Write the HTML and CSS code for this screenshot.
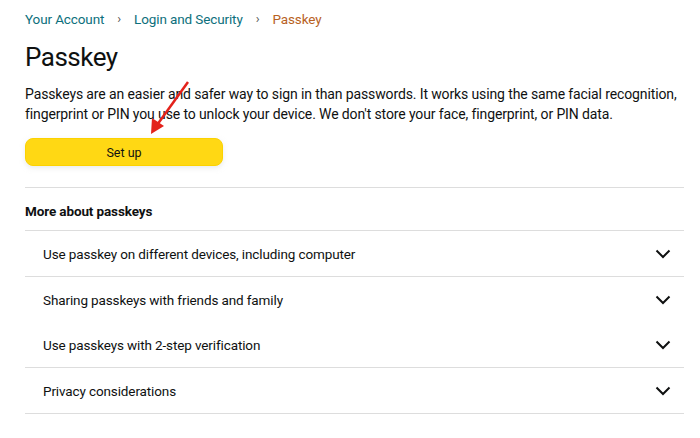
FILE: index.html
```html
<!DOCTYPE html>
<html>
<head>
  <meta charset="UTF-8">
  <title>Passkey</title>
  <link rel="stylesheet" href="styles.css">
</head>
<body>
  <div class="page">
    <div class="breadcrumb">
      <a href="#">Your Account</a>
      <span class="sep">›</span>
      <a href="#">Login and Security</a>
      <span class="sep">›</span>
      <span class="current">Passkey</span>
    </div>

    <h1>Passkey</h1>
    <p class="intro">Passkeys are an easier and safer way to sign in than passwords. It works using the same facial recognition, fingerprint or PIN you use to unlock your device. We don't store your face, fingerprint, or PIN data.</p>

    <button class="setup">Set up</button>

    <div class="more">
      <div class="more-title">More about passkeys</div>
      <div class="item">
        <span>Use passkey on different devices, including computer</span>
        <svg class="chev" width="16" height="10" viewBox="0 0 16 10"><polyline points="1.5,1.5 8,8 14.5,1.5" /></svg>
      </div>
      <div class="item no-line">
        <span>Sharing passkeys with friends and family</span>
        <svg class="chev" width="16" height="10" viewBox="0 0 16 10"><polyline points="1.5,1.5 8,8 14.5,1.5" /></svg>
      </div>
      <div class="item">
        <span>Use passkeys with 2-step verification</span>
        <svg class="chev" width="16" height="10" viewBox="0 0 16 10"><polyline points="1.5,1.5 8,8 14.5,1.5" /></svg>
      </div>
      <div class="item">
        <span>Privacy considerations</span>
        <svg class="chev" width="16" height="10" viewBox="0 0 16 10"><polyline points="1.5,1.5 8,8 14.5,1.5" /></svg>
      </div>
    </div>

    <!-- red annotation arrow -->
    <svg class="arrow" width="60" height="70" viewBox="0 0 60 70">
      <line x1="48" y1="2" x2="17" y2="45" />
      <polygon points="11,54 12,38 24,46" />
    </svg>
  </div>
</body>
</html>
```

FILE: styles.css
```css
body {
  margin: 0;
  background: #fff;
  color: #0f1111;
  font-family: Roboto, "Liberation Sans", Arial, sans-serif;
  letter-spacing: -0.12px;
}

.page {
  position: relative;
  width: 659px;
  padding: 9px 0 0 25px;
}

.breadcrumb {
  font-size: 13.5px;
  line-height: 20px;
  display: flex;
  gap: 13px;
}

.breadcrumb a {
  color: #0d6f7c;
  text-decoration: none;
}

.breadcrumb .sep {
  color: #555;
  font-size: 13px;
}

.breadcrumb .current {
  color: #b8621f;
}

h1 {
  margin: 10px 0 0;
  font-size: 26px;
  font-weight: normal;
  line-height: 36px;
  letter-spacing: -0.5px;
}

.intro {
  margin: 10px 0 0;
  font-size: 14px;
  line-height: 19.5px;
}

.setup {
  display: block;
  margin-top: 14px;
  width: 198px;
  height: 28px;
  background: #ffd814;
  border: 1px solid #fcd200;
  border-radius: 8px;
  box-shadow: 0 2px 5px rgba(213, 217, 217, 0.5);
  font-family: inherit;
  font-size: 12.5px;
  color: #0f1111;
  padding: 0;
}

.more {
  margin-top: 21px;
  border-top: 1px solid #ddd;
}

.more-title {
  font-size: 13.5px;
  font-weight: bold;
  line-height: 20px;
  padding: 13px 0 9px;
  border-bottom: 1px solid #ddd;
}

.item {
  display: flex;
  align-items: center;
  justify-content: space-between;
  height: 45px;
  padding: 0 13px 0 18px;
  font-size: 13.5px;
  border-bottom: 1px solid #ddd;
}

.item.no-line {
  border-bottom: none;
}

.chev polyline {
  fill: none;
  stroke: #0f1111;
  stroke-width: 2;
}

.arrow {
  position: absolute;
  left: 140px;
  top: 80px;
}

.arrow line {
  stroke: #e3221b;
  stroke-width: 2.5;
}

.arrow polygon {
  fill: #e3221b;
}
```
